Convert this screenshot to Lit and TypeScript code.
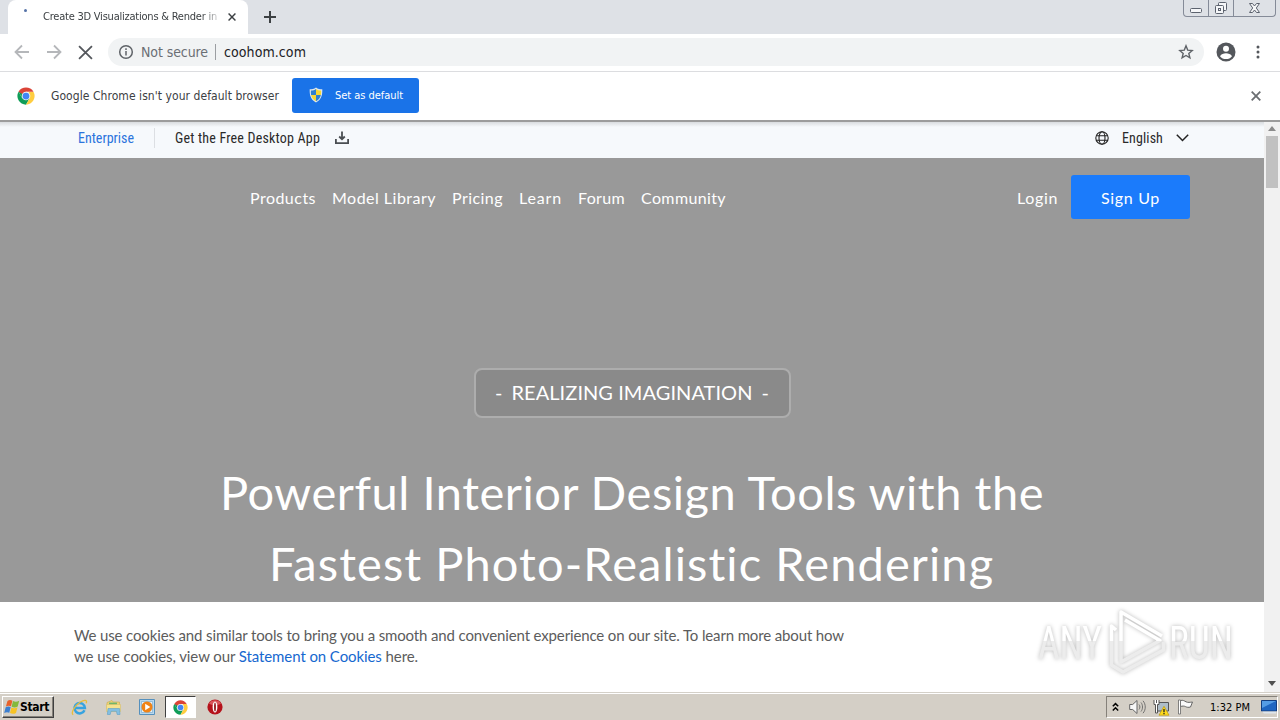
import { LitElement, html, css, svg } from 'lit';
import { customElement, property, query } from 'lit/decorators.js';

/** Single line of text whose tracking is adjusted to fill a given width. */
@customElement('fit-text')
export class FitText extends LitElement {
  static styles = css`
    :host {
      display: inline-block;
      flex: none;
      white-space: nowrap;
    }
  `;

  @property({ type: Number })
  width = 0;

  @query('span')
  private _line!: HTMLSpanElement;

  render() {
    return html`<span><slot></slot></span>`;
  }

  firstUpdated() {
    const count = (this.textContent ?? '').length;
    const natural = this._line.getBoundingClientRect().width;
    this.style.letterSpacing = `${(this.width - natural) / count}px`;
    this.style.width = `${this.width}px`;
  }
}

const chromeLogo = (size: number) => html`
  <svg width=${size} height=${size} viewBox="0 0 48 48">
    <circle cx="24" cy="24" r="23" fill="#fff" />
    <path d="M4.1 12.5A23 23 0 0 0 24 47L34 29.5 24 24 14 29.8z" fill="#0f9d58" />
    <path d="M43.9 12.5A23 23 0 0 1 24 47L34 29.8 31 13z" fill="#ffcd40" />
    <path d="M4.1 12.5 14 29.8 24 24 24 12.5z" fill="#0f9d58" />
    <path d="M4.1 12.5A23 23 0 0 1 43.9 12.5H24L14 18.500z" fill="#db4437" />
    <circle cx="24" cy="24" r="11.5" fill="#f1f1f1" />
    <circle cx="24" cy="24" r="9" fill="#4285f4" />
  </svg>
`;

const shieldIcon = html`
  <svg width="14" height="16" viewBox="0 0 14 16">
    <path d="M7 .5C5 2 3 2.300.7 2.300.5 8 1.500 12.500 7 15.500 12.500 12.500 13.500 8 13.300 2.300 11 2.300 9 2 7 .5z" fill="#dfe8ee" />
    <path d="M7 2v6H2.100C1.800 6.500 1.800 5 1.900 3.500 4 3.500 5.500 3 7 2z" fill="#2f7fd0" />
    <path d="M7 2v6h4.900c.3-1.500.3-3 .2-4.500C10 3.500 8.500 3 7 2z" fill="#f7d633" />
    <path d="M7 8H2.100C2.800 11 4.300 12.800 7 14.300z" fill="#f7d633" />
    <path d="M7 8h4.900C11.200 11 9.700 12.800 7 14.300z" fill="#2f7fd0" />
  </svg>
`;

const arrow = (d: string) => html`
  <svg width="16" height="16" viewBox="0 0 16 16" fill="none" stroke="#b5b7ba" stroke-width="1.8">
    <path d=${d} />
  </svg>
`;

const cross = (size: number, color: string, weight: number) => html`
  <svg width=${size} height=${size} viewBox="0 0 10 10" stroke=${color} stroke-width=${weight}>
    <path d="M.7.7 9.300 9.300M9.300.7.7 9.300" />
  </svg>
`;

const starIcon = html`
  <svg width="16" height="16" viewBox="0 0 16 16" fill="none" stroke="#5f6368" stroke-width="1.400">
    <path d="M8 1.800 9.700 6.100 14.200 6.500 10.800 9.500 11.900 13.800 8 11.500 4.100 13.800 5.200 9.500 1.800 6.500 6.300 6.100z" />
  </svg>
`;

const profileIcon = html`
  <svg width="20" height="20" viewBox="0 0 20 20">
    <circle cx="10" cy="10" r="9.500" fill="#54575c" />
    <circle cx="10" cy="6.800" r="3" fill="#fff" />
    <path d="M4 14.200c1.200-2.200 3.600-3 6-3s4.800.8 6 3c-1.400 1.900-3.600 2.900-6 2.900s-4.600-1-6-2.900z" fill="#fff" />
  </svg>
`;

const globeIcon = html`
  <svg width="14" height="14" viewBox="0 0 14 14" fill="none" stroke="#222" stroke-width="1.100">
    <circle cx="7" cy="7" r="6.200" />
    <ellipse cx="7" cy="7" rx="3" ry="6.200" />
    <path d="M1.300 4.700h11.400M1.300 9.300h11.400" />
  </svg>
`;

const downloadIcon = html`
  <svg width="14" height="14" viewBox="0 0 14 14" fill="none" stroke="#4a4e52" stroke-width="1.800">
    <path d="M7 .5v7.500M4.200 5.500 7 8.300l2.800-2.800M.9 8v4.200h12.200V8" />
  </svg>
`;

const startFlag = html`
  <svg width="16" height="16" viewBox="0 0 16 16">
    <path d="M3.500 2C5 .8 6.800.8 8.400 1.800L7 7.300C5.400 6.400 3.600 6.600 1.900 7.600z" fill="#e8622a" />
    <path d="M9 2.100c1.900 1 4 1 6.200-.3L13.700 7.500c-2 1.200-4 1.200-6.100.2z" fill="#84b93c" />
    <path d="M1.700 8.200c1.700-1 3.400-1 5-.2L5.300 13.700c-1.700-.8-3.400-.7-5.100.3z" fill="#3c7fd0" />
    <path d="M7.400 8.400c2 1 4.100 1 6.100-.1l-1.500 5.600c-2.100 1.300-4.100 1.100-6 .1z" fill="#f7c325" />
  </svg>
`;

const ieIcon = html`
  <svg width="17" height="17" viewBox="0 0 17 17" fill="none">
    <path d="M13.500 11.200A5.200 5.200 0 1 1 13.900 8.900H4.500" stroke="#36a3e0" stroke-width="2.500" />
    <path d="M2.200 15.700C-.5 14 3.500 7 9 3.300 13 .7 16.600.3 15.200 4.300" stroke="#e9bd3a" stroke-width="1.300" />
  </svg>
`;

const explorerIcon = html`
  <svg width="17" height="17" viewBox="0 0 17 17">
    <path d="M2 3.500 7 1.500l1 1.500h6.500V10H2z" fill="#ecd37a" stroke="#cda94a" stroke-width=".6" />
    <path d="M4 3.600h8v2H4z" fill="#6fb56c" />
    <path d="M1.500 5.500h14v7h-14z" fill="#f5e28f" stroke="#d5b860" stroke-width=".5" />
    <path d="M3 9.500h11.500l.5 6h-2.800l-.8-3.200H6l-.8 3.200H2.400z" fill="#83bfe2" stroke="#5c9fc8" stroke-width=".6" />
  </svg>
`;

const playerIcon = html`
  <svg width="16" height="16" viewBox="0 0 16 16">
    <path d="M.5.5h15v15H.5z" fill="#b8d8ee" stroke="#5590bd" />
    <path d="M2.500 2.500h11v11h-11z" fill="#e3f1fa" stroke="#7eaccd" stroke-width=".7" />
    <circle cx="8" cy="8" r="5.500" fill="#f08316" />
    <path d="M6.200 4.700v6.600L11.300 8z" fill="#fff" />
  </svg>
`;

const operaIcon = html`
  <svg width="16" height="16" viewBox="0 0 16 16">
    <circle cx="8" cy="8" r="7.600" fill="#b5121b" />
    <path d="M2 4.600a7 7 0 0 1 12 0C11 7 5 7 2 4.600z" fill="#d9555b" />
    <ellipse cx="8" cy="8" rx="2.400" ry="5.500" fill="#fff" />
    <ellipse cx="8" cy="8" rx=".9" ry="4.600" fill="#8c1015" />
  </svg>
`;

const volumeIcon = html`
  <svg width="17" height="16" viewBox="0 0 17 16" fill="none" stroke="#666">
    <path d="M.7 5.500h3L8 1.500v13l-4.300-4h-3z" fill="#f7f7f7" />
    <path d="M10 5.500c1.200 1.500 1.200 3.500 0 5M12 3.500c2 2.500 2 6.500 0 9M14 1.800c3 3.500 3 9 0 12.400" stroke-width=".9" />
  </svg>
`;

const networkIcon = html`
  <svg width="17" height="17" viewBox="0 0 17 17">
    <path d="M4.500 3.500h11v8.500h-11z" fill="#aebdc8" stroke="#555" />
    <path d="M1 1v4.500h1.500V14h2V5.500H6V1" fill="#fff" stroke="#555" />
    <path d="M3.500 1v3" stroke="#555" />
    <path d="M11 7.300 16 16.200H6z" fill="#ffdb1c" stroke="#bc960f" stroke-width=".7" />
    <path d="M11 10v3.200M11 14v1.200" stroke="#222" stroke-width="1.300" />
  </svg>
`;

const flagIcon = html`
  <svg width="17" height="16" viewBox="0 0 17 16">
    <path d="M3.500 1.500C6 .8 7.500 2 9 2.800c2 1 4 .5 6.500.2L13.500 8c-2 .6-3.700.3-5-.4S5.500 6.900 3.500 7.500z" fill="#fafafa" stroke="#666" />
    <path d="M1.500 1h2v14h-2z" fill="#fff" stroke="#666" stroke-width=".8" />
  </svg>
`;

const desktopIcon = html`
  <svg width="16" height="14" viewBox="0 0 16 14">
    <path d="M.5.5h15v10.500H.5z" fill="#1f66c1" stroke="#143f80" />
    <path d="M1 1h14L1 8z" fill="#559de5" />
    <path d="M1 11.500h14v2H3z" fill="#dde5ec" />
  </svg>
`;

const watermarkMark = svg`
  <g fill="none" stroke="url(#fade)" stroke-width="3.500" stroke-linejoin="round">
    <path d="M88 24 83.500 20v39l11.500 7 40.500-22v-8" />
    <path d="M93 17V6l41 24" />
    <path d="M93 17v39l39-21.500L97 14" />
  </g>
`;

@customElement('app-root')
export class AppRoot extends LitElement {
  static styles = css`
    :host {
      display: block;
      position: relative;
      width: 1280px;
      height: 720px;
      overflow: hidden;
      background: #fff;
      font-family: 'DejaVu Sans Condensed', 'DejaVu Sans', sans-serif;
      font-stretch: condensed;
    }

    * {
      box-sizing: border-box;
    }

    svg {
      display: block;
      flex: none;
    }

    .tabstrip {
      display: flex;
      height: 34px;
      background: #dee1e6;
    }

    .tab {
      display: flex;
      align-items: center;
      width: 240px;
      margin-left: 8px;
      padding-right: 11px;
      border-radius: 8px 8px 0 0;
      background: #fff;
      color: #3c4043;
      font-size: 11px;
    }

    .spinner {
      align-self: flex-start;
      width: 3px;
      height: 3px;
      margin: 9px 16px 0;
      border-radius: 50%;
      background: #5673a8;
    }

    .tab-title {
      width: 177px;
      overflow: hidden;
      line-height: 34px;
      -webkit-mask-image: linear-gradient(90deg, #000 158px, transparent 180px);
      mask-image: linear-gradient(90deg, #000 158px, transparent 180px);
    }

    .tab svg {
      margin-left: 8px;
    }

    .new-tab {
      margin: 11px 0 0 16px;
    }

    .caption {
      display: flex;
      width: 93px;
      height: 17px;
      margin: 0 4px 0 auto;
      border: 1px solid #858b98;
      border-top: 0;
      border-radius: 0 0 4px 4px;
    }

    .toolbar {
      display: flex;
      align-items: center;
      height: 38px;
      padding: 0 14px 1px;
      border-bottom: 1px solid #dcdde0;
      background: #fff;
    }

    .toolbar .nav {
      display: flex;
      align-items: center;
      gap: 16px;
      width: 94px;
    }

    .omnibox {
      display: flex;
      align-items: center;
      width: 1096px;
      height: 28px;
      padding: 0 10px;
      border-radius: 14px;
      background: #f1f3f4;
      color: #202124;
      font-size: 14px;
    }

    .omnibox fit-text {
      margin-top: -1px;
    }

    .not-secure {
      margin-left: 7px;
      color: #6b6f74;
    }

    .divider {
      width: 1px;
      height: 16px;
      margin: 0 8px 0 7px;
      background: #9b9ea2;
    }

    .omnibox .star {
      margin-left: auto;
    }

    .profile {
      margin-left: 12px;
    }

    .menu {
      margin-left: 20px;
    }

    .infobar {
      display: flex;
      align-items: center;
      height: 50px;
      padding: 0 19px 1px 17px;
      border-bottom: 2px solid #9c9c9c;
      background: #fff;
      color: #3c4043;
      font-size: 12px;
    }

    .infobar-text {
      margin-left: 16px;
    }

    .default-button {
      display: flex;
      align-items: center;
      width: 127px;
      height: 35px;
      margin: -1px 0 0 13px;
      padding-left: 17px;
      border-radius: 3px;
      background: #1a73e8;
      color: #fff;
      font-size: 11px;
    }

    .default-button fit-text {
      margin-left: 12px;
    }

    .infobar .dismiss {
      margin-left: auto;
    }

    .viewport {
      display: flex;
      height: 570px;
    }

    .page {
      width: 1264px;
      font-family: Lato, sans-serif;
    }

    .topbar {
      display: flex;
      align-items: center;
      height: 36px;
      padding: 0 75px 5px 78px;
      background: linear-gradient(#d9dcdf, #f6f9fc 5px);
      color: #2a2a2a;
      font-family: Roboto, sans-serif;
      font-size: 14px;
    }

    .enterprise {
      color: #2c74dc;
    }

    .topbar .bar {
      width: 1px;
      height: 20px;
      margin: 0 20px;
      background: #dcdfe3;
    }

    .topbar .download {
      margin-left: 15px;
    }

    .language {
      display: flex;
      align-items: center;
      gap: 13px;
      margin-left: auto;
    }

    .hero {
      display: flex;
      flex-direction: column;
      align-items: center;
      height: 444px;
      background: #999;
      color: #fff;
    }

    .site-nav {
      display: flex;
      align-items: center;
      gap: 16px;
      width: 100%;
      height: 44px;
      margin-top: 17px;
      padding: 0 74px 0 250px;
      font-size: 16px;
    }

    .site-nav fit-text {
      padding-top: 1px;
    }

    .login {
      margin-left: auto;
    }

    .signup {
      display: flex;
      align-items: center;
      justify-content: center;
      width: 119px;
      height: 44px;
      margin-left: -3px;
      border-radius: 3px;
      background: #1b7bfb;
    }

    .tagline {
      display: flex;
      align-items: center;
      justify-content: center;
      gap: 9px;
      width: 317px;
      height: 50px;
      margin-top: 149px;
      padding-bottom: 2px;
      border: 2px solid #adadad;
      border-radius: 8px;
      background: #8a8a8a;
      font-size: 20px;
    }

    .headline {
      display: flex;
      flex-direction: column;
      align-items: center;
      margin: 39px 0 0;
      font-size: 47px;
      font-weight: 400;
      line-height: 71px;
    }

    .cookies {
      display: flex;
      flex-direction: column;
      height: 90px;
      padding: 23px 74px 0;
      background: #fff;
      color: #5c5c5c;
      font-size: 15px;
      line-height: 21px;
    }

    .cookies a {
      color: #1668cf;
    }

    .scrollbar {
      display: flex;
      flex-direction: column;
      align-items: center;
      width: 16px;
      padding: 4px 0 6px;
      background: #f1f1f1;
    }

    .thumb {
      width: 12px;
      height: 52px;
      margin-top: 5px;
      background: #c1c1c1;
    }

    .scrollbar .down {
      margin-top: auto;
    }

    .taskbar {
      display: flex;
      align-items: center;
      height: 28px;
      padding: 2px 2px 1px;
      border-top: 1px solid #d4d0c8;
      background: #d4cfc6;
      box-shadow: inset 0 1px #fff;
      color: #000;
      font-size: 11px;
    }

    .start {
      display: flex;
      align-items: center;
      width: 52px;
      height: 22px;
      padding-left: 1px;
      border: 1px solid;
      border-color: #fff #404040 #404040 #fff;
      box-shadow: inset -1px -1px #85817a;
      font-size: 12px;
      font-weight: 700;
    }

    .launchers {
      display: flex;
      align-items: center;
      margin-left: 17px;
    }

    .launchers > svg {
      margin-right: 17px;
    }

    .active-app {
      display: flex;
      align-items: center;
      justify-content: center;
      width: 31px;
      height: 22px;
      margin: 0 11px 0 -7px;
      border: 1px solid;
      border-color: #404040 #fff #fff #404040;
      background: #fff;
    }

    .tray {
      display: flex;
      align-items: center;
      width: 172px;
      height: 22px;
      margin-left: auto;
      padding-left: 5px;
      border: 1px solid;
      border-color: #85817a #fff #fff #85817a;
    }

    .tray svg + svg {
      margin-left: 7px;
    }

    .tray .chevrons + svg {
      margin-left: 10px;
    }

    .clock {
      margin: 0 11px 0 16px;
    }

    .watermark {
      position: absolute;
      left: 1028px;
      top: 606px;
      font-family: Roboto, sans-serif;
      font-size: 47px;
      filter: drop-shadow(0 0 2px rgba(0, 0, 0, 0.28));
    }
  `;

  private _links: [string, number][] = [
    ['Products', 66],
    ['Model Library', 104],
    ['Pricing', 51],
    ['Learn', 43],
    ['Forum', 47],
    ['Community', 85],
  ];

  render() {
    return html`
      ${this._renderBrowser()}
      <div class="viewport">
        <main class="page">${this._renderTopbar()} ${this._renderHero()} ${this._renderCookies()}</main>
        <div class="scrollbar">
          <svg width="8" height="5" viewBox="0 0 8 5"><path d="M0 5 4 0 8 5z" fill="#8b8b8b" /></svg>
          <div class="thumb"></div>
          <svg class="down" width="8" height="5" viewBox="0 0 8 5"><path d="M0 0h8L4 5z" fill="#505050" /></svg>
        </div>
      </div>
      ${this._renderTaskbar()}
      <svg class="watermark" width="220" height="72" viewBox="0 0 220 72">
        <defs>
          <linearGradient id="fade" gradientUnits="userSpaceOnUse" x1="0" y1="0" x2="0" y2="72">
            <stop offset=".48" stop-color="#fff" />
            <stop offset=".49" stop-color="#ececec" />
          </linearGradient>
        </defs>
        <text x="10" y="53" textLength="64" lengthAdjust="spacingAndGlyphs" fill="url(#fade)">ANY</text>
        ${watermarkMark}
        <text x="141" y="53" textLength="64" lengthAdjust="spacingAndGlyphs" fill="url(#fade)">RUN</text>
      </svg>
    `;
  }

  private _renderBrowser() {
    return html`
      <div class="tabstrip">
        <div class="tab">
          <span class="spinner"></span>
          <div class="tab-title"><fit-text width="174">Create 3D Visualizations &amp; Render in</fit-text></div>
          ${cross(8, '#3c4043', 1.8)}
        </div>
        <svg class="new-tab" width="12" height="12" viewBox="0 0 12 12" stroke="#3c4043" stroke-width="2">
          <path d="M6 0v12M0 6h12" />
        </svg>
        <div class="caption">
          <svg width="91" height="16" viewBox="0 0 91 16" fill="none" stroke="#5c626e">
            <path d="M24.500 0v16M49.500 0v16" stroke="#858b98" />
            <rect x="6.500" y="8.500" width="11" height="4" rx="1" fill="#f5f6f8" />
            <rect x="34.500" y="2.500" width="8" height="8" rx="1" fill="#f5f6f8" />
            <rect x="31.500" y="5.500" width="8" height="8" rx="1" fill="#f5f6f8" />
            <rect x="34.500" y="8.500" width="2" height="2" />
            <path d="M65.500 3.500h3l2 2.500 2-2.500h3L72.300 8l3.200 4.500h-3l-2-2.500-2 2.500h-3L68.700 8z" fill="#f5f6f8" />
          </svg>
        </div>
      </div>
      <div class="toolbar">
        <div class="nav">
          ${arrow('M15 8H2M8 1.500 1.500 8 8 14.500')} ${arrow('M1 8h13M8 1.500 14.500 8 8 14.500')}
          ${cross(15, '#54575c', 1.2)}
        </div>
        <div class="omnibox">
          <svg width="16" height="16" viewBox="0 0 16 16" fill="none" stroke="#5f6368" stroke-width="1.500">
            <circle cx="8" cy="8" r="6.300" />
            <path d="M8 7v4.500M8 4.300v1.600" />
          </svg>
          <fit-text class="not-secure" width="67">Not secure</fit-text>
          <span class="divider"></span>
          <fit-text width="82">coohom.com</fit-text>
          <div class="star">${starIcon}</div>
        </div>
        <div class="profile">${profileIcon}</div>
        <svg class="menu" width="4" height="14" viewBox="0 0 4 14" fill="#54575c">
          <circle cx="2" cy="2" r="1.500" />
          <circle cx="2" cy="7" r="1.500" />
          <circle cx="2" cy="12" r="1.500" />
        </svg>
      </div>
      <div class="infobar">
        ${chromeLogo(18)}
        <fit-text class="infobar-text" width="228">Google Chrome isn't your default browser</fit-text>
        <div class="default-button">${shieldIcon}<fit-text width="68">Set as default</fit-text></div>
        <div class="dismiss">${cross(10, '#6b6e72', 1.8)}</div>
      </div>
    `;
  }

  private _renderTopbar() {
    return html`
      <div class="topbar">
        <fit-text class="enterprise" width="56">Enterprise</fit-text>
        <span class="bar"></span>
        <fit-text width="145">Get the Free Desktop App</fit-text>
        <div class="download">${downloadIcon}</div>
        <div class="language">
          ${globeIcon}
          <fit-text width="41">English</fit-text>
          <svg width="13" height="8" viewBox="0 0 13 8" fill="none" stroke="#222" stroke-width="1.500">
            <path d="M.8.8l5.700 5.700L12.200.8" />
          </svg>
        </div>
      </div>
    `;
  }

  private _renderHero() {
    return html`
      <section class="hero">
        <nav class="site-nav">
          ${this._links.map(([name, width]) => html`<fit-text width=${width}>${name}</fit-text>`)}
          <fit-text class="login" width="41">Login</fit-text>
          <div class="signup"><fit-text width="59">Sign Up</fit-text></div>
        </nav>
        <div class="tagline">
          <span>-</span>
          <fit-text width="241">REALIZING IMAGINATION</fit-text>
          <span>-</span>
        </div>
        <h1 class="headline">
          <fit-text width="824">Powerful Interior Design Tools with the</fit-text>
          <fit-text width="726">Fastest Photo-Realistic Rendering</fit-text>
        </h1>
      </section>
    `;
  }

  private _renderCookies() {
    return html`
      <div class="cookies">
        <fit-text width="770"
          >We use cookies and similar tools to bring you a smooth and convenient experience on our site. To learn more about how</fit-text
        >
        <fit-text width="344">we use cookies, view our <a>Statement on Cookies</a> here.</fit-text>
      </div>
    `;
  }

  private _renderTaskbar() {
    return html`
      <div class="taskbar">
        <div class="start">${startFlag}<fit-text width="29">Start</fit-text></div>
        <div class="launchers">
          ${ieIcon} ${explorerIcon} ${playerIcon}
          <div class="active-app">${chromeLogo(15)}</div>
          ${operaIcon}
        </div>
        <div class="tray">
          <svg class="chevrons" width="7" height="10" viewBox="0 0 7 10" fill="none" stroke="#000" stroke-width="1.500">
            <path d="M.8 4.300 3.500 1.600 6.200 4.300M.8 8.500l2.700-2.700 2.700 2.700" />
          </svg>
          ${volumeIcon} ${networkIcon} ${flagIcon}
          <fit-text class="clock" width="40">1:32 PM</fit-text>
          ${desktopIcon}
        </div>
      </div>
    `;
  }
}
